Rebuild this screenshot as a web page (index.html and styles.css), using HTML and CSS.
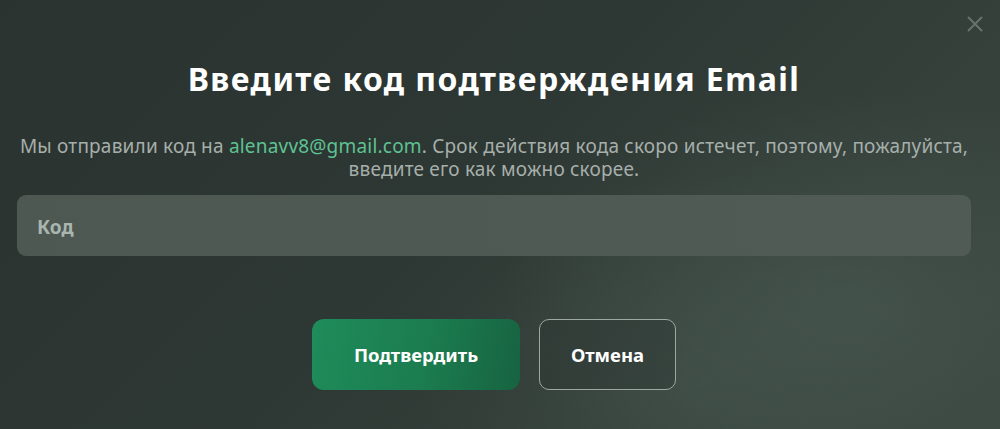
FILE: index.html
```html
<!DOCTYPE html>
<html lang="ru">
<head>
<meta charset="utf-8">
<title>Email</title>
<link rel="stylesheet" href="styles.css">
</head>
<body>
<div class="modal">
  <button class="close" aria-label="Закрыть">
    <svg width="18" height="18" viewBox="0 0 18 18"><path d="M2.5 2.5L15.5 15.5M15.5 2.5L2.5 15.5" stroke="#68736d" stroke-width="2" stroke-linecap="round"/></svg>
  </button>
  <h1 class="title">Введите код подтверждения Email</h1>
  <p class="text">Мы отправили код на <span class="email">alenavv8@gmail.com</span>. Срок действия кода скоро истечет, поэтому, пожалуйста,<br>введите его как можно скорее.</p>
  <div class="field"><span class="placeholder">Код</span></div>
  <div class="actions">
    <button class="btn btn-primary">Подтвердить</button>
    <button class="btn btn-outline">Отмена</button>
  </div>
</div>
</body>
</html>
```

FILE: styles.css
```css
html, body {
  margin: 0;
  padding: 0;
  width: 1000px;
  height: 429px;
  overflow: hidden;
}
body {
  font-family: "Noto Sans", "Open Sans", sans-serif;
  background:
    radial-gradient(ellipse 500px 300px at 850px 300px, rgba(90,110,100,0.3), rgba(0,0,0,0) 70%),
    radial-gradient(ellipse 400px 300px at 700px 380px, rgba(80,100,90,0.25), rgba(0,0,0,0) 70%),
    linear-gradient(135deg, #2a332f 0%, #2d3733 45%, #36413c 75%, #3b4741 100%);
}
.modal {
  position: relative;
  box-sizing: border-box;
  width: 1000px;
  height: 429px;
  padding: 58px 29px 0 17px;
  display: flex;
  flex-direction: column;
  align-items: stretch;
}
.close {
  position: absolute;
  top: 15px;
  right: 16px;
  width: 18px;
  height: 18px;
  padding: 0;
  border: 0;
  background: none;
  display: flex;
}
.title {
  margin: 0;
  text-align: center;
  color: #ffffff;
  font-size: 32px;
  font-weight: 700;
  line-height: 42px;
  letter-spacing: 1.4px;
}
.text {
  margin: 35px 0 0;
  text-align: center;
  color: #a7afab;
  font-size: 19px;
  line-height: 23px;
  letter-spacing: 0.2px;
}
.email {
  color: #5ec292;
}
.field {
  margin-top: 14px;
  height: 61px;
  border-radius: 9px;
  background: linear-gradient(90deg, #4d5852 0%, #4f5a54 60%, #505b55 100%);
  display: flex;
  align-items: center;
  padding-left: 20px;
}
.placeholder {
  color: #a9b6af;
  font-size: 19px;
  font-weight: 700;
  padding-top: 3px;
}
.actions {
  margin-top: 63px;
  display: flex;
  justify-content: center;
  gap: 19px;
}
.btn {
  font-family: inherit;
  font-size: 18.5px;
  font-weight: 700;
  color: #ffffff;
  height: 71px;
  cursor: pointer;
}
.btn-primary {
  width: 208px;
  border: 0;
  border-radius: 12px;
  background: linear-gradient(100deg, #1f8c5a 0%, #1b7c4f 55%, #176341 100%);
}
.btn-outline {
  width: 137px;
  border: 1.5px solid #9ea8a3;
  border-radius: 10px;
  background: rgba(40,50,45,0.35);
}
```
